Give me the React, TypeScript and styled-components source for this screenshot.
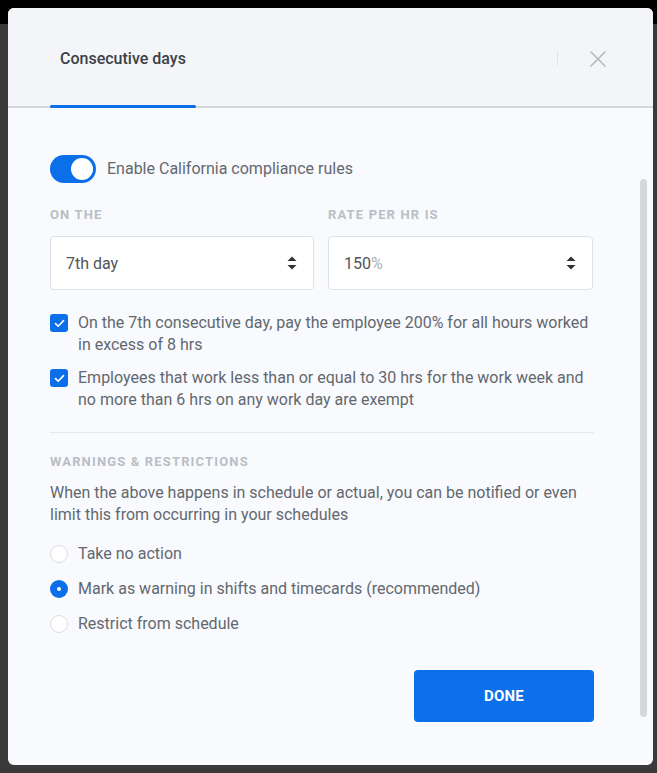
import React from "react";
import styled, { createGlobalStyle } from "styled-components";

const Global = createGlobalStyle`
  html, body { margin: 0; padding: 0; }
  body { font-family: Roboto, "Liberation Sans", sans-serif; background: #3a3a3a; }
  * { box-sizing: border-box; }
`;

const Backdrop = styled.div`
  width: 657px;
  height: 773px;
  padding: 8px 4px 8px 8px;
  background: linear-gradient(#000 0 24px, #3a3a3a 24px);
`;

const Modal = styled.div`
  width: 645px;
  height: 757px;
  border-radius: 6px;
  overflow: hidden;
  background: #f9fafe;
  display: flex;
  flex-direction: column;
`;

const Header = styled.div`
  height: 100px;
  flex: none;
  background: #f4f5f8;
  border-bottom: 2px solid #d4d7dd;
  display: flex;
  align-items: stretch;
  padding: 3px 46px 0 42px;
`;

const Tab = styled.div`
  position: relative;
  padding: 0 10px;
  display: flex;
  align-items: center;
  font-size: 16px;
  font-weight: 500;
  color: #3b4046;
  &::after {
    content: "";
    position: absolute;
    left: 0;
    right: 0;
    bottom: -2px;
    height: 3px;
    border-radius: 2px;
    background: #0a6fe8;
  }
`;

const HeaderTools = styled.div`
  margin-left: auto;
  display: flex;
  align-items: center;
  gap: 31px;
`;

const VDivider = styled.div`
  width: 1px;
  height: 15px;
  background: #e2e4e8;
`;

const CloseBtn = styled.button`
  border: 0;
  background: none;
  padding: 0;
  width: 18px;
  height: 18px;
  display: flex;
  color: #b3b8be;
`;

const Body = styled.div`
  position: relative;
  flex: 1;
  padding: 47px 59px 0 42px;
  display: flex;
  flex-direction: column;
`;

const ScrollThumb = styled.div`
  position: absolute;
  right: 6px;
  top: 71px;
  width: 7px;
  height: 538px;
  border-radius: 4px;
  background: #d5d7dc;
`;

const ToggleRow = styled.div`
  display: flex;
  align-items: center;
  gap: 11px;
  height: 28px;
`;

const Switch = styled.div`
  width: 46px;
  height: 28px;
  border-radius: 14px;
  background: #0a6fe8;
  padding: 3px;
  display: flex;
  justify-content: flex-end;
  &::after {
    content: "";
    width: 22px;
    height: 22px;
    border-radius: 50%;
    background: #fff;
  }
`;

const Text = styled.span`
  font-size: 16px;
  line-height: 22px;
  color: #62686e;
`;

const FieldGrid = styled.div`
  display: grid;
  grid-template-columns: 264px 265px;
  column-gap: 14px;
  margin-top: 25px;
`;

const Field = styled.div`
  display: flex;
  flex-direction: column;
  gap: 14px;
`;

const Label = styled.div<{ $mt?: number }>`
  font-size: 13px;
  line-height: 14px;
  font-weight: 700;
  letter-spacing: 1.15px;
  color: #b9bec4;
  text-transform: uppercase;
  margin-top: ${(p) => p.$mt ?? 0}px;
`;

const Select = styled.div`
  height: 54px;
  background: #fff;
  border: 1px solid #dde2e9;
  border-radius: 4px;
  display: flex;
  align-items: center;
  padding: 0 16px 0 15px;
  font-size: 16px;
  color: #50565c;
`;

const Muted = styled.span`
  color: #a9b0b8;
`;

const Arrows = styled.svg`
  margin-left: auto;
  flex: none;
`;

const CheckList = styled.div`
  display: flex;
  flex-direction: column;
  gap: 11px;
  margin-top: 22px;
`;

const CheckItem = styled.div`
  display: flex;
  align-items: flex-start;
  gap: 10px;
`;

const CheckBox = styled.div`
  width: 18px;
  height: 18px;
  margin-top: 2px;
  flex: none;
  border-radius: 3px;
  background: #0a6fe8;
  display: flex;
  align-items: center;
  justify-content: center;
`;

const Divider = styled.div`
  height: 1px;
  background: #e6e8ec;
  margin-top: 21px;
`;

const Para = styled(Text)`
  display: block;
  margin-top: 13px;
`;

const RadioList = styled.div`
  display: flex;
  flex-direction: column;
  gap: 13px;
  margin-top: 17px;
`;

const RadioItem = styled.div`
  display: flex;
  align-items: center;
  gap: 10px;
`;

const Radio = styled.div<{ $on?: boolean }>`
  width: 18px;
  height: 18px;
  border-radius: 50%;
  flex: none;
  background: ${(p) => (p.$on ? "#0a6fe8" : "#fff")};
  border: ${(p) => (p.$on ? "none" : "1px solid #d9dde3")};
  display: flex;
  align-items: center;
  justify-content: center;
  &::after {
    content: "";
    width: 4px;
    height: 4px;
    border-radius: 50%;
    background: #fff;
    display: ${(p) => (p.$on ? "block" : "none")};
  }
`;

const Footer = styled.div`
  display: flex;
  justify-content: flex-end;
  margin-top: 35px;
`;

const DoneBtn = styled.button`
  width: 180px;
  height: 52px;
  border: 0;
  border-radius: 4px;
  background: #0b70ea;
  color: #fff;
  font-family: Roboto, "Liberation Sans", sans-serif;
  font-size: 15px;
  font-weight: 700;
  letter-spacing: 0.2px;
`;

const UpDown = () => (
  <Arrows width="10" height="16" viewBox="0 0 10 16">
    <path d="M0.5 6 L5 1.5 L9.5 6 Z" fill="#2f3338" />
    <path d="M0.5 10 L5 14.5 L9.5 10 Z" fill="#2f3338" />
  </Arrows>
);

const Check = () => (
  <svg width="11" height="9" viewBox="0 0 11 9">
    <path d="M1.5 4.6 L4.2 7.2 L9.5 1.6" fill="none" stroke="#fff" strokeWidth="1.6" strokeLinecap="round" strokeLinejoin="round" />
  </svg>
);

export default function App() {
  return (
    <>
      <Global />
      <Backdrop>
        <Modal>
          <Header>
            <Tab>Consecutive days</Tab>
            <HeaderTools>
              <VDivider />
              <CloseBtn aria-label="Close">
                <svg width="18" height="18" viewBox="0 0 18 18">
                  <path d="M2 2 L16 16 M16 2 L2 16" stroke="currentColor" strokeWidth="1.6" strokeLinecap="round" />
                </svg>
              </CloseBtn>
            </HeaderTools>
          </Header>
          <Body>
            <ScrollThumb />
            <ToggleRow>
              <Switch />
              <Text>Enable California compliance rules</Text>
            </ToggleRow>
            <FieldGrid>
              <Field>
                <Label>On the</Label>
                <Select>
                  7th day
                  <UpDown />
                </Select>
              </Field>
              <Field>
                <Label>Rate per hr is</Label>
                <Select>
                  150<Muted>%</Muted>
                  <UpDown />
                </Select>
              </Field>
            </FieldGrid>
            <CheckList>
              <CheckItem>
                <CheckBox>
                  <Check />
                </CheckBox>
                <Text>On the 7th consecutive day, pay the employee 200% for all hours worked in excess of 8 hrs</Text>
              </CheckItem>
              <CheckItem>
                <CheckBox>
                  <Check />
                </CheckBox>
                <Text>Employees that work less than or equal to 30 hrs for the work week and no more than 6 hrs on any work day are exempt</Text>
              </CheckItem>
            </CheckList>
            <Divider />
            <Label $mt={22}>Warnings &amp; Restrictions</Label>
            <Para>When the above happens in schedule or actual, you can be notified or even limit this from occurring in your schedules</Para>
            <RadioList>
              <RadioItem>
                <Radio />
                <Text>Take no action</Text>
              </RadioItem>
              <RadioItem>
                <Radio $on />
                <Text>Mark as warning in shifts and timecards (recommended)</Text>
              </RadioItem>
              <RadioItem>
                <Radio />
                <Text>Restrict from schedule</Text>
              </RadioItem>
            </RadioList>
            <Footer>
              <DoneBtn>DONE</DoneBtn>
            </Footer>
          </Body>
        </Modal>
      </Backdrop>
    </>
  );
}
